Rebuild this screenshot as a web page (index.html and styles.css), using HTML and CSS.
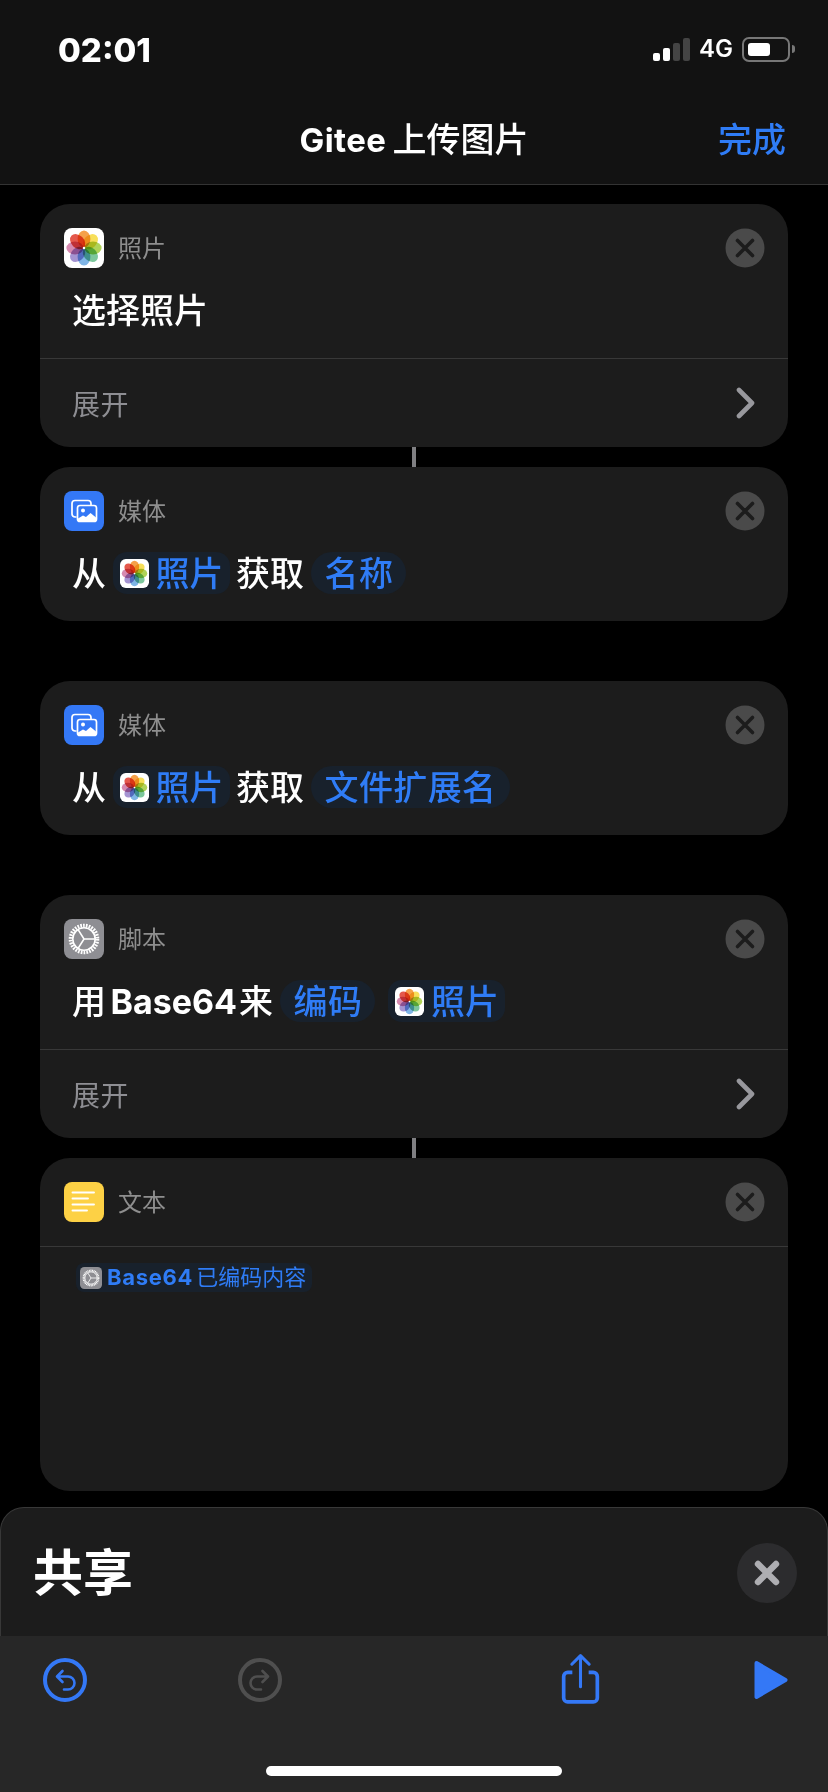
FILE: index.html
```html
<!DOCTYPE html>
<html lang="zh">
<head>
    <meta charset="utf-8"/>
    <title>Gitee 上传图片</title>
    <link rel="stylesheet" href="styles.css">
</head>
<body>
<svg class="defs" width="0" height="0">
    <symbol id="photos" viewBox="0 0 40 40">
        <rect width="40" height="40" rx="8" fill="#fff"/>
        <g class="petals">
            <ellipse cx="20" cy="11" rx="6.4" ry="8.6" fill="#f5a14a"/>
            <ellipse cx="20" cy="11" rx="6.4" ry="8.6" fill="#f7df5a" transform="rotate(45 20 20)"/>
            <ellipse cx="20" cy="11" rx="6.4" ry="8.6" fill="#b0d358" transform="rotate(90 20 20)"/>
            <ellipse cx="20" cy="11" rx="6.4" ry="8.6" fill="#7cc79c" transform="rotate(135 20 20)"/>
            <ellipse cx="20" cy="11" rx="6.4" ry="8.6" fill="#7fb5e6" transform="rotate(180 20 20)"/>
            <ellipse cx="20" cy="11" rx="6.4" ry="8.6" fill="#a594d2" transform="rotate(225 20 20)"/>
            <ellipse cx="20" cy="11" rx="6.4" ry="8.6" fill="#d68ab0" transform="rotate(270 20 20)"/>
            <ellipse cx="20" cy="11" rx="6.4" ry="8.6" fill="#e4584c" transform="rotate(315 20 20)"/>
        </g>
        <circle cx="20" cy="20" r="1.2" fill="#fff"/>
    </symbol>
    <symbol id="media" viewBox="0 0 40 40">
        <rect width="40" height="40" rx="8" fill="#3478f6"/>
        <path d="M12.5 26 H11 a3 3 0 0 1 -3 -3 V12.5 a3 3 0 0 1 3 -3 H24 a3 3 0 0 1 3 3 V14" fill="none" stroke="#fff" stroke-width="1.7"/>
        <rect x="13.5" y="14.5" width="19" height="16" rx="2.5" fill="#3478f6" stroke="#fff" stroke-width="1.7"/>
        <circle cx="19" cy="19.5" r="2" fill="#fff"/>
        <path d="M14 30 V27.5 L19 24.5 L22 26 L26.5 22 L32 26.5 V30 Z" fill="#fff"/>
    </symbol>
    <symbol id="gear" viewBox="0 0 40 40">
        <rect width="40" height="40" rx="8" fill="#8e8e93"/>
        <circle cx="20" cy="20" r="13.5" fill="none" stroke="#fff" stroke-width="3.6" stroke-dasharray="1.7 1.13"/>
        <circle cx="20" cy="20" r="11.2" fill="none" stroke="#fff" stroke-width="1.6"/>
        <path d="M20 20 L14 10.5 M20 20 H31 M20 20 L14 29.5" stroke="#fff" stroke-width="1.5" fill="none"/>
    </symbol>
    <symbol id="notes" viewBox="0 0 40 40">
        <rect width="40" height="40" rx="8" fill="#fdd145"/>
        <path d="M8.5 10.5 H30 M8.5 16.5 H24 M8.5 22.5 H30 M8.5 28.5 H23" stroke="#fff" stroke-width="1.9" stroke-linecap="round"/>
    </symbol>
    <symbol id="close" viewBox="0 0 40 40">
        <circle cx="20" cy="20" r="19.5" fill="#4a4a4a"/>
        <path d="M12.5 12.5 L27.5 27.5 M27.5 12.5 L12.5 27.5" stroke="#1c1c1c" stroke-width="3.6" stroke-linecap="round"/>
    </symbol>
    <symbol id="chevron" viewBox="0 0 20 32">
        <path d="M3 3 L16 16 L3 29" fill="none" stroke="#98989d" stroke-width="4.6" stroke-linecap="round" stroke-linejoin="round"/>
    </symbol>
    <symbol id="undo" viewBox="0 0 44 44">
        <circle cx="22" cy="22" r="20" fill="none" stroke="currentColor" stroke-width="4"/>
        <path d="M19.5 13 L14 18.5 L19.5 24 M14.5 18.5 H25 a6.5 6.5 0 0 1 0 13 H21" fill="none" stroke="currentColor" stroke-width="2.6" stroke-linecap="round" stroke-linejoin="round"/>
    </symbol>
</svg>

<header class="top">
    <div class="statusBar">
        <span class="clock">02:01</span>
        <div class="statusRight">
            <div class="signal">
                <i class="bar bar1"></i>
                <i class="bar bar2"></i>
                <i class="bar bar3"></i>
                <i class="bar bar4"></i>
            </div>
            <span class="network">4G</span>
            <div class="battery"><i class="batteryFill"></i></div>
            <i class="batteryNub"></i>
        </div>
    </div>
    <div class="navBar">
        <span></span>
        <span class="navTitle">Gitee<span class="navCjk">上传图片</span></span>
        <span class="navDone">完成</span>
    </div>
</header>

<main class="list">
    <section class="card">
        <div class="cardHead">
            <svg class="appIcon"><use href="#photos"/></svg>
            <span class="cardName">照片</span>
            <svg class="closeIcon"><use href="#close"/></svg>
        </div>
        <div class="cardBody">选择照片</div>
        <div class="expand">
            <span>展开</span>
            <svg class="chevron"><use href="#chevron"/></svg>
        </div>
    </section>
    <div class="link"></div>
    <section class="card">
        <div class="cardHead">
            <svg class="appIcon"><use href="#media"/></svg>
            <span class="cardName">媒体</span>
            <svg class="closeIcon"><use href="#close"/></svg>
        </div>
        <div class="cardBody">
            <span>从</span>
            <span class="pill pillIcon"><svg class="pillApp"><use href="#photos"/></svg>照片</span>
            <span>获取</span>
            <span class="pill pillText">名称</span>
        </div>
    </section>
    <section class="card spaced">
        <div class="cardHead">
            <svg class="appIcon"><use href="#media"/></svg>
            <span class="cardName">媒体</span>
            <svg class="closeIcon"><use href="#close"/></svg>
        </div>
        <div class="cardBody">
            <span>从</span>
            <span class="pill pillIcon"><svg class="pillApp"><use href="#photos"/></svg>照片</span>
            <span>获取</span>
            <span class="pill pillText">文件扩展名</span>
        </div>
    </section>
    <section class="card spaced">
        <div class="cardHead">
            <svg class="appIcon"><use href="#gear"/></svg>
            <span class="cardName">脚本</span>
            <svg class="closeIcon"><use href="#close"/></svg>
        </div>
        <div class="cardBody">
            <span>用</span>
            <b class="latin">Base64</b>
            <span>来</span>
            <span class="pill pillText">编码</span>
            <span class="pill pillIcon pillLast"><svg class="pillApp"><use href="#photos"/></svg>照片</span>
        </div>
        <div class="expand">
            <span>展开</span>
            <svg class="chevron"><use href="#chevron"/></svg>
        </div>
    </section>
    <div class="link"></div>
    <section class="card textCard">
        <div class="cardHead textHead">
            <svg class="appIcon"><use href="#notes"/></svg>
            <span class="cardName">文本</span>
            <svg class="closeIcon"><use href="#close"/></svg>
        </div>
        <div class="textBody">
            <span class="token"><svg class="tokenApp"><use href="#gear"/></svg><b>Base64</b>已编码内容</span>
        </div>
    </section>
</main>

<section class="sheet">
    <h2 class="sheetTitle">共享</h2>
    <button class="sheetClose">
        <svg width="28" height="28" viewBox="0 0 28 28"><path d="M5 5 L23 23 M23 5 L5 23" stroke="#aeaeb2" stroke-width="6.4" stroke-linecap="round"/></svg>
    </button>
</section>

<footer class="toolbar">
    <div class="tools">
        <svg class="tool toolBlue" width="44" height="44"><use href="#undo"/></svg>
        <svg class="tool toolDim redo" width="44" height="44"><use href="#undo"/></svg>
        <svg class="tool toolBlue share" width="41" height="51" viewBox="0 0 40 50">
            <path d="M12 19 H7.5 a4 4 0 0 0 -4 4 V44 a4 4 0 0 0 4 4 H32.5 a4 4 0 0 0 4 -4 V23 a4 4 0 0 0 -4 -4 H28" fill="none" stroke="currentColor" stroke-width="3.6"/>
            <path d="M20 33 V3 M11.5 11 L20 2.5 L28.5 11" fill="none" stroke="currentColor" stroke-width="3" stroke-linecap="round" stroke-linejoin="round"/>
        </svg>
        <svg class="tool play" width="34" height="40" viewBox="0 0 34 40">
            <path d="M2.5 3 L31.5 20 L2.5 37 Z" fill="#3478f6" stroke="#3478f6" stroke-width="4" stroke-linejoin="round"/>
        </svg>
    </div>
    <div class="homeBar"></div>
</footer>
</body>
</html>
```

FILE: styles.css
```css
*{
    box-sizing: border-box;
}
html, body{
    margin: 0;
    padding: 0;
}
body{
    width: 828px;
    height: 1792px;
    overflow: hidden;
    background: #000;
    color: #fff;
    font-family: Inter, "Noto Sans CJK SC", sans-serif;
}
.defs{
    position: absolute;
}
.petals{
    isolation: isolate;
}
.petals ellipse{
    mix-blend-mode: multiply;
}

/* status and nav */
.top{
    height: 185px;
    background: #121212;
    border-bottom: 1px solid #333;
}
.statusBar{
    height: 100px;
    padding: 30px 33px 0 58px;
    display: flex;
    justify-content: space-between;
    align-items: flex-start;
}
.clock{
    font-size: 33px;
    font-weight: 800;
    line-height: 40px;
}
.statusRight{
    display: flex;
    align-items: center;
    height: 24px;
    margin-top: 7px;
}
.signal{
    display: flex;
    align-items: flex-end;
    gap: 3px;
    height: 23px;
    margin-right: 9px;
}
.bar{
    display: block;
    width: 7px;
    border-radius: 2px;
    background: #fff;
}
.bar1{
    height: 8px;
}
.bar2{
    height: 13px;
}
.bar3{
    height: 18px;
    background: #444;
}
.bar4{
    height: 23px;
    background: #444;
}
.network{
    font-size: 24px;
    font-weight: 600;
    line-height: 24px;
    margin-right: 9px;
}
.battery{
    width: 48px;
    height: 25px;
    padding: 4px;
    border: 2px solid #777;
    border-radius: 7px;
}
.batteryFill{
    display: block;
    width: 22px;
    height: 100%;
    background: #fff;
    border-radius: 3px;
}
.batteryNub{
    display: block;
    width: 3px;
    height: 8px;
    margin-left: 2px;
    background: #777;
    border-radius: 0 3px 3px 0;
}
.navBar{
    display: grid;
    grid-template-columns: 1fr auto 1fr;
    align-items: center;
    height: 44px;
    margin-top: 18px;
}
.navTitle{
    font-size: 33px;
    font-weight: 700;
    line-height: 44px;
    letter-spacing: 0.4px;
}
.navCjk{
    margin-left: 6px;
    font-size: 34px;
    font-weight: 500;
    letter-spacing: 0;
}
.navDone{
    padding-right: 42px;
    font-size: 34px;
    font-weight: 500;
    color: #2f7cf6;
    text-align: right;
    line-height: 44px;
}

/* action cards */
.list{
    padding: 19px 40px 0;
}
.card{
    display: flow-root;
    background: #1c1c1c;
    border-radius: 30px;
}
.spaced{
    margin-top: 60px;
}
.link{
    width: 4px;
    height: 20px;
    margin: 0 auto;
    background: #7f7f82;
}
.cardHead{
    display: flex;
    align-items: center;
    gap: 14px;
    padding: 24px 23px 0 24px;
}
.appIcon{
    width: 40px;
    height: 40px;
    flex: none;
}
.cardName{
    flex: 1;
    padding-top: 2px;
    font-size: 24px;
    line-height: 38px;
    color: #8e8e8e;
}
.closeIcon{
    width: 40px;
    height: 40px;
    flex: none;
}
.cardBody{
    display: flex;
    align-items: center;
    gap: 6.5px;
    height: 42px;
    margin: 21px 0 27px;
    padding: 2px 0 0 32px;
    font-size: 34px;
    font-weight: 500;
    line-height: 40px;
}
.latin{
    font-weight: 700;
    margin: 0 -4.5px 0 -2px;
}
.pill{
    display: flex;
    align-items: center;
    height: 42px;
    margin-top: -2px;
    padding-top: 2px;
    background: #18212c;
    color: #2f7cf6;
}
.pillIcon{
    gap: 7px;
    padding-left: 7px;
    padding-right: 6px;
    border-radius: 14px;
}
.pillText{
    padding-left: 14px;
    padding-right: 13px;
    border-radius: 21px;
    letter-spacing: 0.4px;
}
.pillLast{
    margin-left: 6px;
}
.pillApp{
    width: 29px;
    height: 29px;
    flex: none;
    margin-top: -2px;
}
.expand{
    display: flex;
    align-items: center;
    justify-content: space-between;
    height: 89px;
    padding: 0 32px;
    border-top: 1px solid #383838;
    font-size: 28px;
    letter-spacing: 0.4px;
    color: #8e8e93;
}
.chevron{
    width: 20px;
    height: 32px;
}
.textCard{
    height: 333px;
}
.textHead{
    padding-bottom: 24px;
}
.textBody{
    display: flex;
    align-items: flex-start;
    padding: 16px 0 0 36px;
    border-top: 1px solid #383838;
}
.token{
    display: flex;
    align-items: center;
    height: 29px;
    padding: 0 6px 0 4px;
    background: #18212c;
    border-radius: 8px;
    color: #2f7cf6;
    font-size: 22px;
    line-height: 29px;
}
.token b{
    font-weight: 700;
    letter-spacing: 0.7px;
    margin-right: 3px;
}
.tokenApp{
    width: 22px;
    height: 22px;
    flex: none;
    margin-right: 5px;
}

/* share sheet */
.sheet{
    display: flex;
    justify-content: space-between;
    align-items: flex-start;
    height: 129px;
    margin-top: 16px;
    padding: 35px 30px 0 32px;
    background: #1c1c1c;
    border: 1px solid #383838;
    border-bottom: 0;
    border-radius: 24px 24px 0 0;
}
.sheetTitle{
    margin: 0;
    font-size: 50px;
    font-weight: 700;
    line-height: 60px;
}
.sheetClose{
    display: flex;
    align-items: center;
    justify-content: center;
    width: 60px;
    height: 60px;
    padding: 0;
    border: 0;
    border-radius: 50%;
    background: #2c2c2e;
}

/* bottom toolbar */
.toolbar{
    height: 156px;
    background: #272727;
}
.tools{
    display: flex;
    align-items: center;
    height: 130px;
    padding: 0 40px 42px 43px;
}
.tool{
    flex: none;
}
.toolBlue{
    color: #3478f6;
}
.toolDim{
    color: #4f4f4f;
}
.redo{
    margin-left: 151px;
    transform: scaleX(-1);
}
.share{
    margin: 0 0 3px 278px;
}
.play{
    margin-left: auto;
}
.homeBar{
    width: 296px;
    height: 10px;
    margin: 0 auto;
    background: #fff;
    border-radius: 5px;
}
```
